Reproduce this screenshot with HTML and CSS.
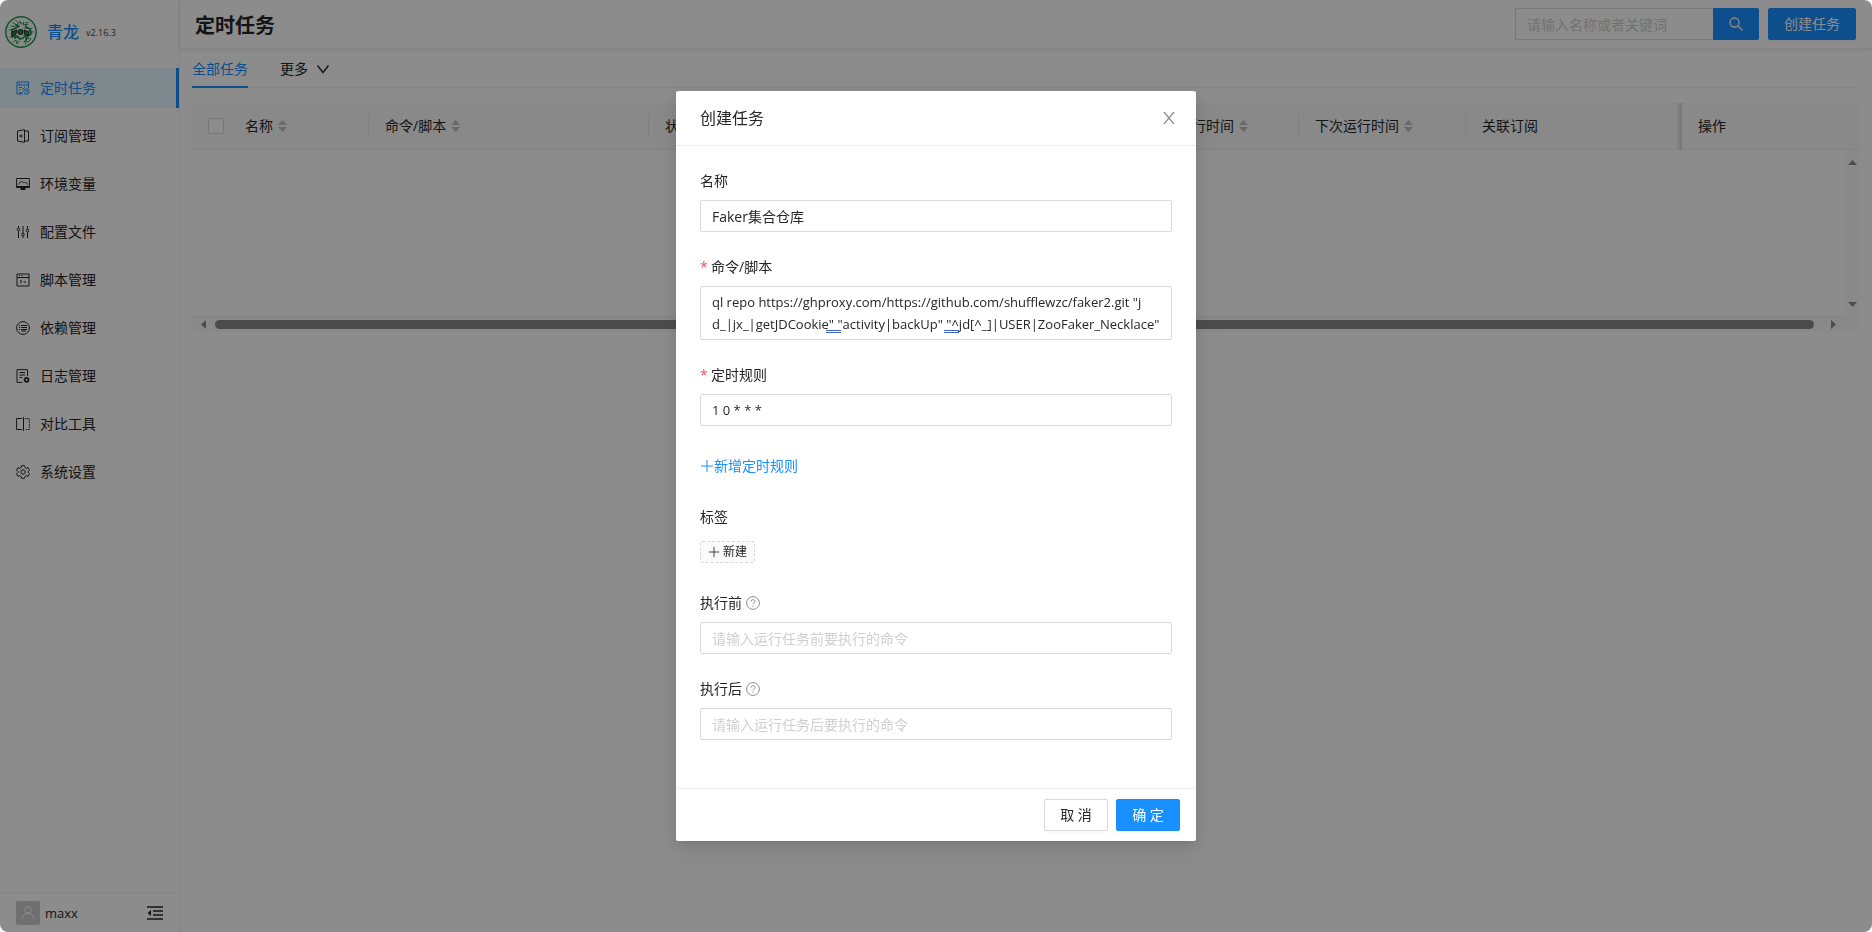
FILE: index.html
```html
<!DOCTYPE html>
<html lang="zh-CN">
<head>
<meta charset="utf-8">
<title>青龙 - 定时任务</title>
<link rel="stylesheet" href="styles.css">
</head>
<body>
<div class="app">
  <aside class="sider">
    <div class="brand">
      <svg class="brand-logo" viewBox="0 0 32 32" aria-hidden="true">
        <circle cx="16" cy="16" r="15.200" fill="#f4faf6" stroke="#1f9a50" stroke-width="1.500"/>
        <g fill="none" stroke="#1f8a48" stroke-linecap="round" stroke-linejoin="round">
          <path stroke-width=".900" d="M8 7l4 2 3-4 1 3 3-2-1 3 5-1-3 2 3 2-4 0M6 10l5 1M4.500 14l4-1M27 12l-3 3 4 1M5 21l4 0M8 26l3-2 1 4 2-3M21 28l-2-3 4 1 3-3-4-1M13 6.500l-2-2M23 6l-2 1"/>
          <path stroke-width="1.800" d="M11 9l3 1-3 2-4 2 0 4 3 2M21 11l4 2 1 5-3 2M10 22l2-2 3 3 3-1M19 20l3 2-1 2"/>
        </g>
        <circle cx="15.500" cy="16" r="2.600" fill="#1f8a48"/>
        <path fill="#1f8a48" d="M7 16l5-2-1 4-4 3zM19 14l5 2-1 4-3-1z"/>
      </svg>
      <span class="brand-name">青龙</span>
      <span class="brand-version">v2.16.3</span>
    </div>
    <nav class="menu">
      <a class="menu-item is-active" href="#crontab">
        <svg class="icon" viewBox="0 0 14 14"><path d="M12.500 7V1H1v12h6M1 4h11.500M3 2.500h1M3 6.500h3M3 9.500l1.500-1M6 9l3-3M3 11.500h3"/><circle cx="10.500" cy="10.500" r="2.700"/><path d="M10.500 9v1.700H12"/></svg>
        定时任务</a>
      <a class="menu-item" href="#subscription">
        <svg class="icon" viewBox="0 0 14 14"><path d="M1.500 2L8.500.700v12.600L1.500 12zM8.500 2h4v10h-4M3.300 7h3.400M5 5.300v3.400"/></svg>
        订阅管理</a>
      <a class="menu-item" href="#env">
        <svg class="icon" viewBox="0 0 14 14"><path d="M.600 1.500h12.800v9H.600z"/><path d="M2.500 7.500C4 6 4 4.500 5.500 4.500S7 6 8.500 5.500s2 0 3 2"/><path class="solid" d="M.500 9h13v2H.500zM4.500 11h5v2h-5z"/></svg>
        环境变量</a>
      <a class="menu-item" href="#config">
        <svg class="icon" viewBox="0 0 14 14"><path d="M2.500 1v2M2.500 6v7M7 1v7M7 11v2M11.500 1v3M11.500 7v6"/><circle cx="2.500" cy="4.500" r="1.300"/><circle cx="7" cy="9.500" r="1.300"/><circle cx="11.500" cy="5.500" r="1.300"/></svg>
        配置文件</a>
      <a class="menu-item" href="#script">
        <svg class="icon" viewBox="0 0 14 14"><path d="M1 1h12v12H1zM1 4.500h12M3 2.700h1M5.500 2.700h1M4 7l2 1.500L4 10M7.500 9H10"/></svg>
        脚本管理</a>
      <a class="menu-item" href="#dependence">
        <svg class="icon" viewBox="0 0 14 14"><circle cx="7" cy="7" r="6.400"/><path d="M5.200 4.500H11M5.200 6.500H11M5.200 8.500H11M5.200 10H10M3 4.500h1.200M3 6.500h1.200M3 8.500h1.200"/></svg>
        依赖管理</a>
      <a class="menu-item" href="#log">
        <svg class="icon" viewBox="0 0 14 14"><path d="M11.500 7V.600H1v12.800h5.500M3.500 3.500H9M3.500 6H9M3.500 8.500H6"/><circle cx="10.500" cy="10.800" r="2" stroke-width="1.800"/></svg>
        日志管理</a>
      <a class="menu-item" href="#diff">
        <svg class="icon" viewBox="0 0 14 14"><path d="M6 1.500H.600v11H6M7.500 0v14"/><path stroke-dasharray="1.500 1" d="M9 1.500h4.400v11H9"/></svg>
        对比工具</a>
      <a class="menu-item" href="#setting">
        <svg class="icon" viewBox="0 0 14 14"><path d="M5.500.700h3l.500 1.800 1.300.700 1.800-.500 1.400 2.500L12.200 6.500v1l1.300 1.300-1.400 2.500-1.800-.500-1.300.700-.500 1.800h-3L5 11.500l-1.300-.700-1.800.500L.500 8.800l1.300-1.300v-1L.500 5.200l1.400-2.500 1.800.500L5 2.500z"/><circle cx="7" cy="7" r="2.200"/></svg>
        系统设置</a>
    </nav>
    <div class="user-bar">
      <span class="avatar"><svg viewBox="0 0 14 14"><circle cx="7" cy="4" r="3.200"/><path d="M1 13.500c0-3.500 2.500-6 6-6s6 2.500 6 6"/></svg></span>
      <span class="user-name">maxx</span>
      <button class="fold" type="button" aria-label="收起菜单"><svg viewBox="0 0 16 14"><path d="M0 1h16M6 5h10M6 9h10M0 13h16"/><path class="solid" d="M4 4v6L.500 7z"/></svg></button>
    </div>
  </aside>

  <main class="main">
    <header class="page-header">
      <h1 class="page-title">定时任务</h1>
      <div class="header-tools">
        <form class="search">
          <input class="search-input" type="search" placeholder="请输入名称或者关键词" aria-label="搜索任务">
          <button class="search-button" type="button" aria-label="搜索"><svg viewBox="0 0 14 14"><circle cx="5.500" cy="5.500" r="4.500"/><path d="M9 9l4.500 4.500"/></svg></button>
        </form>
        <button class="button primary" type="button">创建任务</button>
      </div>
    </header>

    <div class="content">
      <div class="tabs">
        <button class="tab is-active" type="button">全部任务</button>
        <button class="tab" type="button">更多 <svg class="chevron" viewBox="0 0 12 12"><path d="M.500 2.500l5.500 7 5.500-7"/></svg></button>
      </div>

      <div class="table-box">
        <table class="table">
          <colgroup><col class="c-check"><col class="c-name"><col class="c-cmd"><col class="c-state"><col class="c-rule"><col class="c-last"><col class="c-next"><col class="c-sub"><col class="c-op"></colgroup>
          <thead>
            <tr>
              <th><input class="checkbox" type="checkbox" aria-label="全选"></th>
              <th class="split">名称<span class="sorter"></span></th>
              <th class="split">命令/脚本<span class="sorter"></span></th>
              <th class="split">状态</th>
              <th class="split">定时规则</th>
              <th class="split">最后运行时间<span class="sorter"></span></th>
              <th class="split">下次运行时间<span class="sorter"></span></th>
              <th class="near-fixed">关联订阅</th>
              <th class="fixed">操作</th>
            </tr>
          </thead>
        </table>
        <div class="scroll-view">
          <div class="scroll-blank"></div>
          <div class="track-y"><i class="arrow up"></i><i class="arrow down"></i></div>
          <div class="track-x"><i class="arrow left"></i><i class="thumb"></i><i class="arrow right"></i></div>
          <div class="track-corner"></div>
        </div>
      </div>
    </div>
  </main>
</div>

<div class="mask">
  <section class="modal" role="dialog" aria-modal="true" aria-labelledby="modal-title">
    <header class="modal-header">
      <h2 class="modal-title" id="modal-title">创建任务</h2>
      <button class="close" type="button" aria-label="关闭"><svg viewBox="0 0 12 12"><path d="M1 0l10 12M11 0L1 12"/></svg></button>
    </header>
    <form class="modal-body">
      <div class="field">
        <label class="label" for="name">名称</label>
        <input class="input" id="name" type="text" value="Faker集合仓库">
      </div>
      <div class="field">
        <label class="label required" for="command">命令/脚本</label>
        <div class="command-box">
          <textarea class="input code command" id="command" rows="2" spellcheck="false">ql repo https://ghproxy.com/https://github.com/shufflewzc/faker2.git "j
d_|jx_|getJDCookie" "activity|backUp" "^jd[^_]|USER|ZooFaker_Necklace"</textarea>
          <i class="grammar-mark first"></i>
          <i class="grammar-mark second"></i>
        </div>
      </div>
      <div class="field">
        <label class="label required" for="rule">定时规则</label>
        <input class="input code" id="rule" type="text" value="1 0 * * *">
      </div>
      <div class="field">
        <button class="add-rule" type="button"><svg class="plus" viewBox="0 0 14 14"><path d="M7 1v12M1 7h12"/></svg>新增定时规则</button>
      </div>
      <div class="field">
        <span class="label">标签</span>
        <div class="tag-row"><button class="new-tag" type="button"><svg class="plus" viewBox="0 0 14 14"><path d="M7 1v12M1 7h12"/></svg>新建</button></div>
      </div>
      <div class="field">
        <label class="label" for="before">执行前<svg class="help" viewBox="0 0 14 14"><circle cx="7" cy="7" r="6.400"/><path d="M5 5.600c0-2.600 4-2.600 4 0 0 1.400-2 1.300-2 2.700M7 9.600v1.200"/></svg></label>
        <input class="input" id="before" type="text" placeholder="请输入运行任务前要执行的命令">
      </div>
      <div class="field">
        <label class="label" for="after">执行后<svg class="help" viewBox="0 0 14 14"><circle cx="7" cy="7" r="6.400"/><path d="M5 5.600c0-2.600 4-2.600 4 0 0 1.400-2 1.300-2 2.700M7 9.600v1.200"/></svg></label>
        <input class="input" id="after" type="text" placeholder="请输入运行任务后要执行的命令">
      </div>
    </form>
    <footer class="modal-footer">
      <button class="button" type="button">取 消</button>
      <button class="button primary" type="button">确 定</button>
    </footer>
  </section>
</div>
</body>
</html>
```
FILE: styles.css
```css
* { box-sizing: border-box; }

html { background: #fff; }

body {
  margin: 0;
  font: 14px/22px "Open Sans", "Noto Sans CJK SC", sans-serif;
  color: #262626;
}

button, input, textarea { font: inherit; color: inherit; }
button { padding: 0; border: 0; background: none; cursor: pointer; }
svg { display: block; flex: none; fill: none; stroke: currentColor; stroke-width: 1; }
.solid { fill: currentColor; stroke: none; }

.app { display: flex; min-height: 100vh; background: #fff; }

/* Sidebar */
.sider {
  display: flex;
  flex: none;
  flex-direction: column;
  width: 180px;
  border-right: 1px solid #f0f0f0;
}

.brand { display: flex; align-items: center; height: 64px; padding-left: 5px; }
.brand-logo { width: 32px; height: 32px; margin-right: 10px; }
.brand-name { margin-right: 7px; font-size: 16px; font-weight: 500; color: #1890ff; }
.brand-version { padding-top: 2px; font-size: 9px; color: #444; }

.menu { display: flex; flex: 1; flex-direction: column; gap: 8px; padding-top: 4px; }
.menu-item {
  display: flex;
  align-items: center;
  gap: 10px;
  height: 40px;
  padding-left: 16px;
  color: inherit;
  text-decoration: none;
}
.menu-item.is-active { color: #1890ff; background: #e6f7ff; border-right: 3px solid #1890ff; }
.icon { width: 14px; height: 14px; }

.user-bar {
  display: flex;
  align-items: center;
  height: 40px;
  padding: 0 16px;
  border-top: 1px solid #f0f0f0;
}
.avatar {
  display: grid;
  place-items: center;
  width: 24px;
  height: 24px;
  margin-right: 5px;
  border-radius: 2px;
  color: #fff;
  background: #ccc;
}
.avatar svg { width: 14px; height: 14px; }
.user-name { font-size: 13px; }
.fold { margin-left: auto; }
.fold svg { width: 16px; height: 14px; stroke-width: 1.5; }

/* Page header */
.main { flex: 1; min-width: 0; }
.page-header {
  display: flex;
  align-items: center;
  justify-content: space-between;
  height: 49px;
  padding: 0 16px 0 15px;
  border-bottom: 1px solid #f0f0f0;
  box-shadow: 0 1px 4px rgba(0, 21, 41, .08);
}
.page-title { margin: 0; padding-top: 3px; font-size: 20px; line-height: 32px; font-weight: 700; }
.header-tools { display: flex; gap: 9px; }
.search { display: flex; }
.search-input {
  width: 198px;
  height: 32px;
  padding: 0 11px;
  border: 1px solid #d9d9d9;
  border-right: 0;
  border-radius: 2px 0 0 2px;
  background: #fff;
}
::placeholder { color: #d0d0d0; opacity: 1; }
.search-button {
  display: grid;
  place-items: center;
  width: 46px;
  color: #fff;
  background: #1890ff;
  border-radius: 0 2px 2px 0;
}
.search-button svg { width: 14px; height: 14px; stroke-width: 1.3; }

.button {
  min-width: 64px;
  height: 32px;
  padding: 0 15px;
  border: 1px solid #d9d9d9;
  border-radius: 2px;
  background: #fff;
  box-shadow: 0 2px 0 rgba(0, 0, 0, .02);
}
.button.primary { color: #fff; border-color: #1890ff; background: #1890ff; }

/* Tabs and table */
.content { padding: 0 12px; }
.tabs { display: flex; gap: 32px; border-bottom: 1px solid #f0f0f0; }
.tab {
  display: flex;
  align-items: center;
  gap: 9px;
  height: 39px;
  margin-bottom: -1px;
  padding-top: 2px;
  border-bottom: 2px solid transparent;
}
.tab.is-active { color: #1890ff; border-bottom-color: #1890ff; }
.chevron { width: 12px; height: 12px; stroke-width: 1.4; }

.table-box { margin-top: 15px; }
.table { width: 100%; table-layout: fixed; border-collapse: separate; border-spacing: 0; }
.table th {
  position: relative;
  height: 47px;
  padding: 0 16px;
  border-bottom: 1px solid #f0f0f0;
  background: #fafafa;
  font-weight: 400;
  text-align: left;
  white-space: nowrap;
}
.c-check { width: 37px; }
.c-name { width: 140px; }
.c-cmd { width: 280px; }
.c-state { width: 100px; }
.c-rule { width: 385px; }
.c-last { width: 165px; }
.c-next { width: 167px; }
.c-op { width: 178px; }
.split::after {
  position: absolute;
  top: 12px;
  right: 0;
  width: 1px;
  height: 22px;
  background: #e8e8e8;
  content: "";
}
.near-fixed::after {
  position: absolute;
  top: 0;
  right: 0;
  width: 6px;
  height: 47px;
  background: linear-gradient(to right, transparent, #d4d4d4);
  content: "";
}
.checkbox {
  display: block;
  width: 16px;
  height: 16px;
  margin: 0;
  appearance: none;
  border: 1px solid #d9d9d9;
  border-radius: 2px;
  background: #fff;
}
.sorter {
  display: inline-block;
  width: 9px;
  height: 12px;
  margin-left: 5px;
  vertical-align: -1px;
  background: #bfbfbf;
  clip-path: polygon(50% 0, 100% 42%, 0 42%, 0 58%, 100% 58%, 50% 100%, 0 58%, 0 42%);
}

.scroll-view { display: grid; grid-template-columns: 1fr 15px; grid-template-rows: 166px 16px; }
.track-y {
  display: flex;
  flex-direction: column;
  align-items: center;
  justify-content: space-between;
  padding: 10px 0 9px;
  background: #fafafa;
}
.track-x {
  display: flex;
  align-items: center;
  gap: 9px;
  padding: 0 9px;
  border-top: 1px solid #f0f0f0;
  background: #fafafa;
}
.track-corner { background: #fafafa; }
.thumb { flex: 1; height: 9px; margin-right: 8px; border-radius: 5px; background: #8a8a8a; }
.arrow { background: #8a8a8a; }
.arrow.up, .arrow.down { width: 9px; height: 5px; }
.arrow.left, .arrow.right { width: 5px; height: 9px; }
.arrow.up { clip-path: polygon(50% 0, 100% 100%, 0 100%); }
.arrow.down { clip-path: polygon(0 0, 100% 0, 50% 100%); }
.arrow.left { clip-path: polygon(0 50%, 100% 0, 100% 100%); }
.arrow.right { clip-path: polygon(0 0, 100% 50%, 0 100%); }

/* Modal */
.mask {
  position: fixed;
  inset: 0;
  display: flex;
  align-items: center;
  justify-content: center;
  border-radius: 8px;
  background: rgba(0, 0, 0, .45);
}
.modal {
  width: 520px;
  border-radius: 2px;
  background: #fff;
  box-shadow: 0 3px 6px -4px rgba(0, 0, 0, .12), 0 6px 16px 0 rgba(0, 0, 0, .08), 0 9px 28px 8px rgba(0, 0, 0, .05);
}
.modal-header {
  display: flex;
  align-items: center;
  justify-content: space-between;
  height: 55px;
  padding: 0 21px 0 24px;
  border-bottom: 1px solid #f0f0f0;
}
.modal-title { margin: 0; font-size: 16px; font-weight: 400; }
.close { color: #8c8c8c; }
.close svg { width: 12px; height: 12px; stroke-width: 1.3; }
.modal-body { display: grid; gap: 24px; padding: 24px 24px 48px; }
.field { display: grid; gap: 8px; min-height: 32px; }
.label { display: flex; align-items: center; gap: 4px; height: 22px; }
.required::before { width: 7px; color: #ff4d4f; content: "*"; }
.input {
  display: block;
  width: 100%;
  height: 32px;
  padding: 0 11px;
  border: 1px solid #d9d9d9;
  border-radius: 2px;
  background: #fff;
}
.code { font-size: 13px; }
.command-box { position: relative; }
.command { height: 54px; padding: 4px 11px; resize: none; overflow: hidden; word-break: break-all; }
.grammar-mark {
  position: absolute;
  top: 44px;
  width: 15px;
  height: 3px;
  border: solid #3f63c4;
  border-width: 1px 0;
}
.grammar-mark.first { left: 126px; }
.grammar-mark.second { left: 244px; }
.add-rule { display: flex; align-items: center; justify-self: start; color: #1890ff; }
.plus { width: 14px; height: 14px; }
.tag-row { display: flex; align-items: center; height: 32px; }
.new-tag {
  display: flex;
  align-items: center;
  gap: 3px;
  height: 22px;
  padding: 0 7px;
  border: 1px dashed #d9d9d9;
  border-radius: 2px;
  background: #fafafa;
  font-size: 12px;
}
.new-tag .plus { width: 12px; height: 12px; }
.help { width: 14px; height: 14px; color: #8c8c8c; }
.modal-footer {
  display: flex;
  justify-content: flex-end;
  gap: 8px;
  padding: 10px 16px;
  border-top: 1px solid #f0f0f0;
}
```
